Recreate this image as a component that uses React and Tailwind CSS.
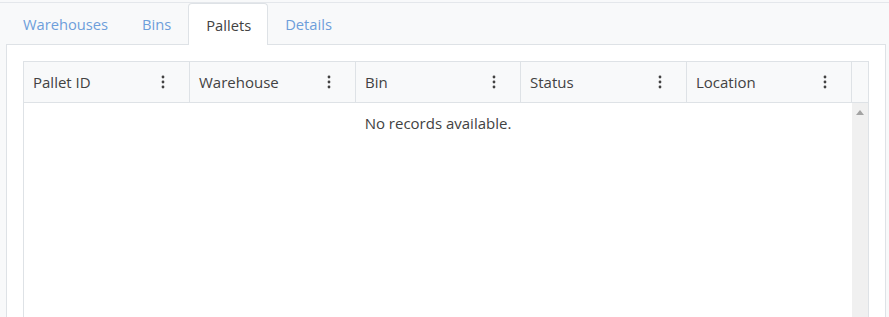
import React from 'react';

const tabs = ['Warehouses', 'Bins', 'Pallets', 'Details'];
const columns = [
    { name: 'Pallet ID', width: 'w-[166px]' },
    { name: 'Warehouse', width: 'w-[166px]' },
    { name: 'Bin', width: 'w-[165px]' },
    { name: 'Status', width: 'w-[166px]' },
    { name: 'Location', width: 'w-[165px]' },
];

const MoreVertical = () => (
    <svg width="16" height="16" viewBox="0 0 16 16" className="text-[#424242]">
        <circle cx="8" cy="3" r="1.4" fill="currentColor" />
        <circle cx="8" cy="8" r="1.4" fill="currentColor" />
        <circle cx="8" cy="13" r="1.4" fill="currentColor" />
    </svg>
);

const App = () => {
    const active = 'Pallets';

    return (
        <div
            className="w-[889px] h-[317px] overflow-hidden bg-[#f8f9fa] text-[15px] text-[#424242]"
            style={{ fontFamily: '"Open Sans", "Noto Sans", sans-serif' }}
        >
            <div className="mt-[2px] border-t border-[#e4e7eb]">
                {/* Tab strip */}
                <div className="flex pl-[6px] h-[41px] items-end text-[14.7px]">
                    {tabs.map((tab) =>
                        tab === active ? (
                            <div
                                key={tab}
                                className="relative z-10 -mb-px h-[42px] flex items-center pt-px pl-[17px] pr-[16px] bg-white border border-b-0 border-[#dee2e6] rounded-t-[4px]"
                            >
                                {tab}
                            </div>
                        ) : (
                            <div key={tab} className="h-[41px] flex items-center pt-px px-[17px] text-[#6d9eda]">
                                {tab}
                            </div>
                        )
                    )}
                </div>

                {/* Panel */}
                <div className="ml-[6px] mr-[3px] h-[300px] bg-white border border-[#dee2e6] pt-[16px] px-[16px]">
                    <div className="border border-[#dee2e6] h-[300px] flex flex-col">
                        {/* Header */}
                        <div className="flex h-[41px] bg-[#f8f9fa] border-b border-[#dee2e6]">
                            {columns.map((col) => (
                                <div
                                    key={col.name}
                                    className={`${col.width} shrink-0 border-r border-[#dee2e6] flex items-center justify-between pl-[9px] pr-[18px]`}
                                >
                                    <span>{col.name}</span>
                                    <MoreVertical />
                                </div>
                            ))}
                            <div className="flex-1" />
                        </div>

                        {/* Body */}
                        <div className="flex flex-1">
                            <div className="flex-1 text-center pt-[10px] leading-[20px]">
                                No records available.
                            </div>
                            <div className="w-[16px] bg-[#f0f0f0] flex justify-center pt-[7px]">
                                <svg width="8" height="5" viewBox="0 0 8 5">
                                    <path d="M0 5 L4 0 L8 5 Z" fill="#a3a3a3" />
                                </svg>
                            </div>
                        </div>
                    </div>
                </div>
            </div>
        </div>
    );
};

export default App;
